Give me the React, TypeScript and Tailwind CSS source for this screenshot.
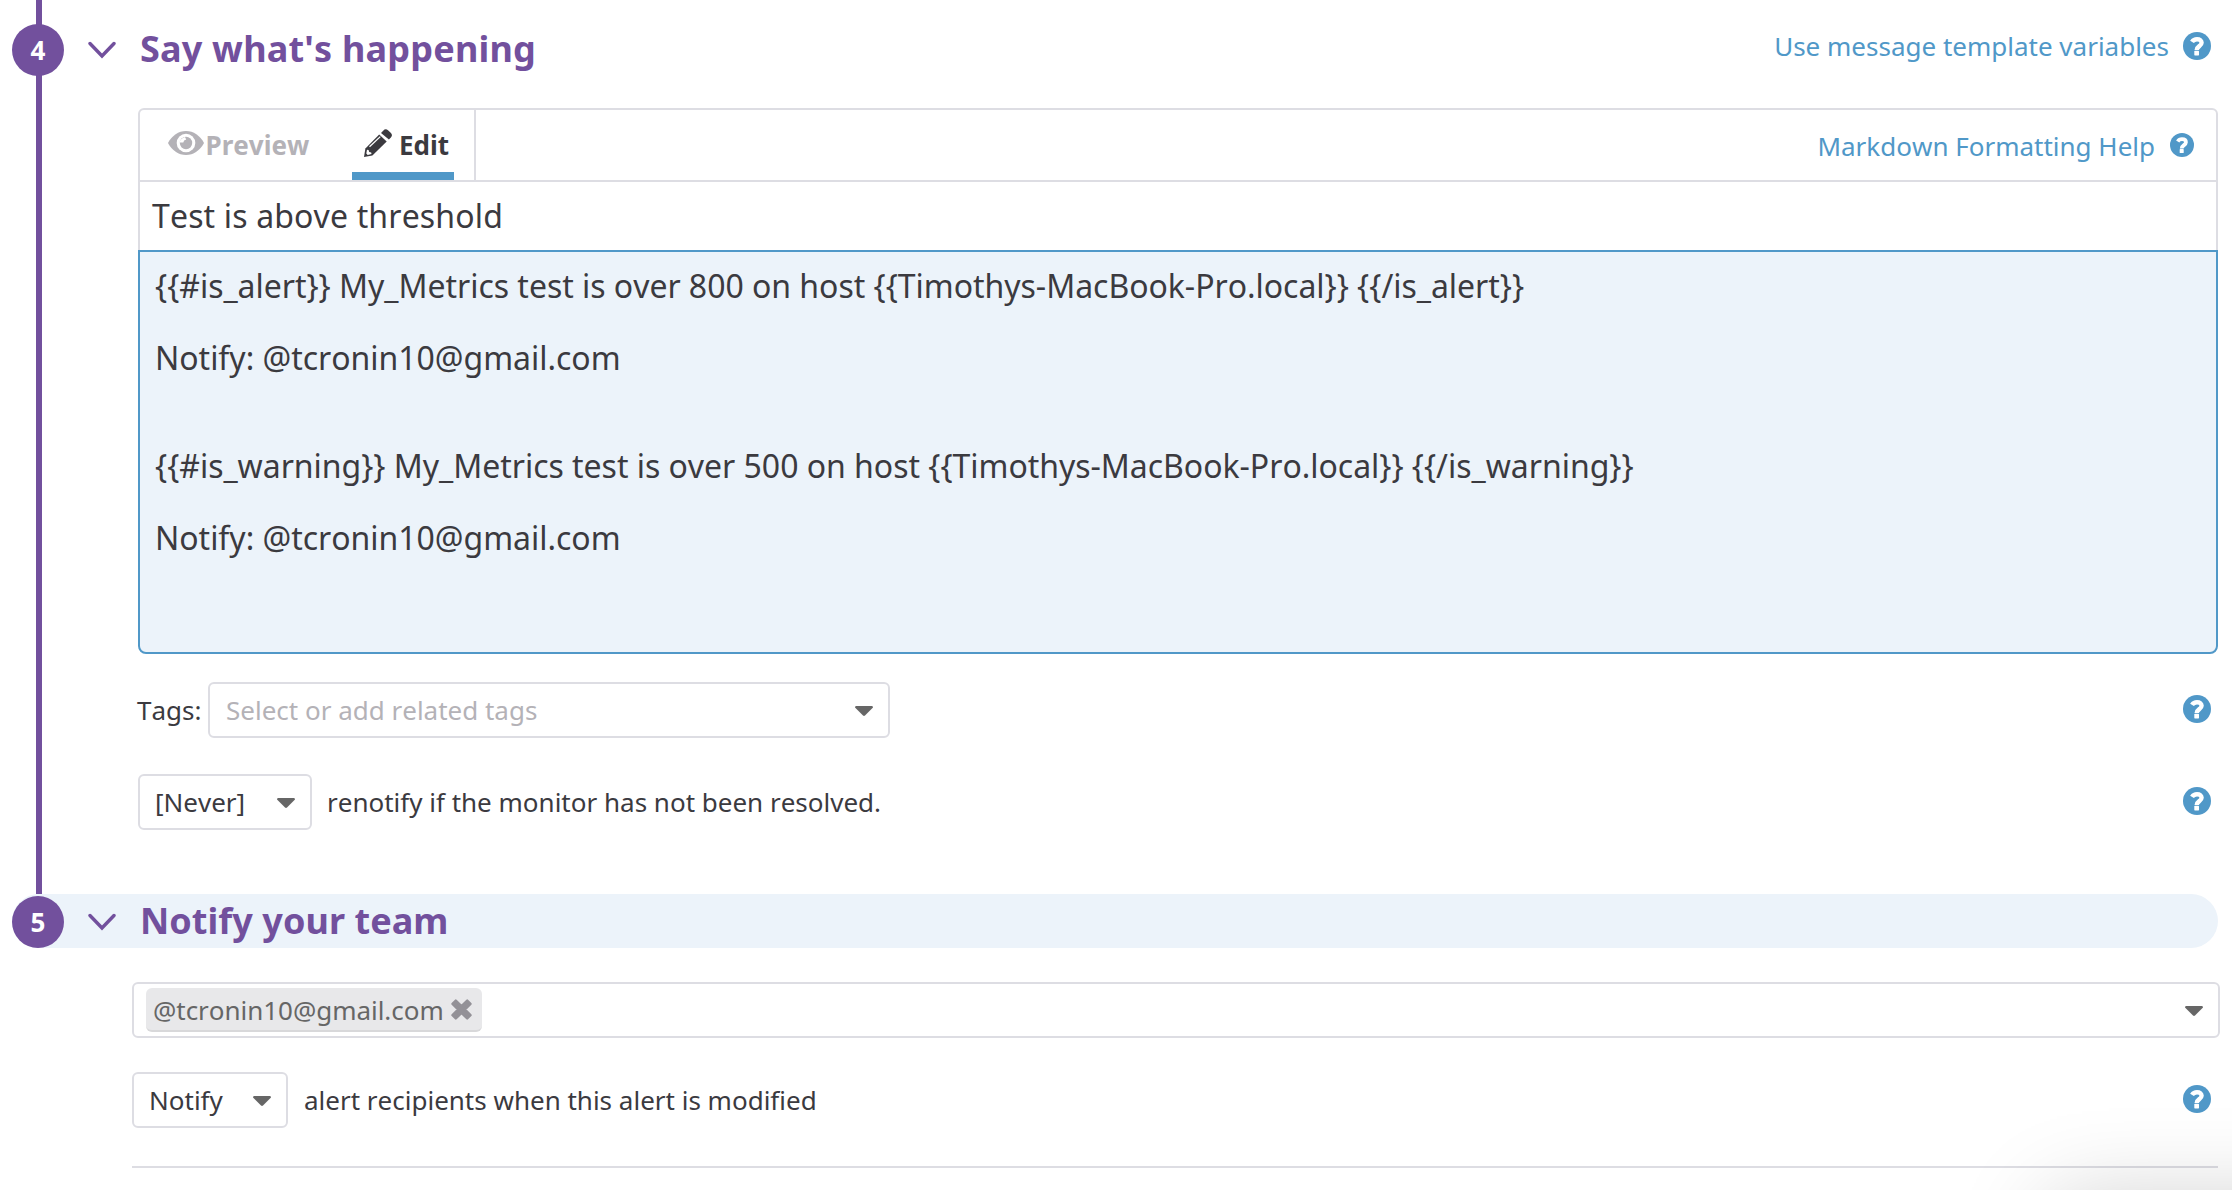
import type { ReactNode } from "react";

function HelpIcon({ className }: { className: string }) {
  return (
    <svg viewBox="0 0 28 28" className={`shrink-0 ${className}`}>
      <circle cx="14" cy="14" r="14" fill="#5098c8" />
      <path
        d="M9 9.9C10.2 8 11.9 7.2 14 7.2c2.8 0 4.6 1.5 4.6 3.6 0 3.4-4.8 3.3-4.9 7.2"
        fill="none"
        stroke="#fff"
        strokeWidth="4.4"
      />
      <rect x="11.3" y="18.8" width="4.7" height="4.6" rx="0.6" fill="#fff" />
    </svg>
  );
}

function Chevron() {
  return (
    <svg viewBox="0 0 28 18" className="h-[18px] w-7 shrink-0">
      <path
        d="M2 2.5L14 15L26 2.5"
        fill="none"
        stroke="#72509d"
        strokeWidth="3.4"
        strokeLinecap="round"
      />
    </svg>
  );
}

function Caret() {
  return (
    <svg viewBox="0 0 18 10" className="mt-0.5 h-[10px] w-[18px] shrink-0">
      <path d="M1 0h16q1 .3 1 1.600L10 9.500q-1 .8-2 0L0 1.600Q0 .3 1 0z" fill="#666" />
    </svg>
  );
}

function EyeIcon() {
  return (
    <svg viewBox="0 0 36 24" className="mb-1 h-6 w-9 shrink-0">
      <path
        d="M0 12C4 4.500 10.500 0 18 0s14 4.500 18 12c-4 7.500-10.500 12-18 12S4 19.500 0 12z"
        fill="#b4b2b7"
      />
      <circle cx="18" cy="12" r="9.300" fill="#fff" />
      <circle cx="18" cy="12" r="6.200" fill="#b4b2b7" />
      <path d="M11.500 11.500q.5-4 5.500-5.500l1.200 2.500q-2.700.3-2.900 3z" fill="#fff" />
    </svg>
  );
}

function PencilIcon() {
  return (
    <svg viewBox="0 0 28 28" className="mt-1 h-7 w-7 shrink-0">
      <path
        d="M19.200 1.700Q21.500-.8 24 1.200l2.700 2.500q2.400 2.500.2 4.700l-2 2.200-7.900-6.700z"
        fill="#3b3a3f"
      />
      <path d="M15.200 5.400l7.500 7.200L8.400 26.400 0 28l1.400-8.600z" fill="#3b3a3f" />
      <path d="M5.500 17.800L16.300 7.600" stroke="#fff" strokeWidth="1.300" />
      <path d="M3 20.700l1.600.4.600 2 2 .4.300 1.500-3.800.9-1.400-1.500z" fill="#fff" />
    </svg>
  );
}

function RemoveIcon() {
  return (
    <svg viewBox="0 0 21 21" className="h-[21px] w-[21px] shrink-0">
      <path
        d="M4.800 1.500l5.700 5.500 5.700-5.500 3.300 3.300-5.500 5.700 5.500 5.700-3.300 3.300-5.700-5.500-5.700 5.500-3.300-3.300 5.500-5.700-5.500-5.700z"
        fill="#939197"
        stroke="#939197"
        strokeWidth="2.400"
        strokeLinejoin="round"
      />
    </svg>
  );
}

function StepBadge({ children }: { children: ReactNode }) {
  return (
    <div className="flex size-[52px] shrink-0 items-center justify-center rounded-full bg-[#72509d] text-[26px] font-bold leading-none text-white">
      {children}
    </div>
  );
}

const selectBox =
  "flex h-14 items-center justify-between rounded-md border-2 border-[#dddde3] bg-white pr-[15px]";

const message = `{{#is_alert}} My_Metrics test is over 800 on host {{Timothys-MacBook-Pro.local}} {{/is_alert}}

Notify: @tcronin10@gmail.com


{{#is_warning}} My_Metrics test is over 500 on host {{Timothys-MacBook-Pro.local}} {{/is_warning}}

Notify: @tcronin10@gmail.com`;

function MessageEditor() {
  return (
    <div className="ml-[138px] mt-8 w-[2080px]">
      <div className="flex h-[74px] rounded-t-md border-2 border-[#dddde3]">
        <div className="flex w-[336px] border-r-2 border-[#dddde3] text-[26px] font-bold">
          <div className="flex h-[70px] items-center pl-7 text-[#b4b2b7]">
            <EyeIcon />
            <span className="mb-px ml-[1.5px] leading-none">Preview</span>
          </div>
          <div className="ml-auto mr-5 flex h-[70px] w-[102px] items-center border-b-8 border-[#5098c8] pl-3 text-[#3b3a3f]">
            <PencilIcon />
            <span className="ml-[7px] mt-[7px] leading-none">Edit</span>
          </div>
        </div>
        <div className="ml-auto mr-[22px] flex items-center text-[26px] text-[#5098c8]">
          <span className="mr-[15px] mt-0.5 leading-none">Markdown Formatting Help</span>
          <HelpIcon className="size-6" />
        </div>
      </div>
      <div className="h-[68px] border-x-2 border-[#dddde3] pl-3 text-[32px] leading-[68px] tracking-[0.15px]">
        Test is above threshold
      </div>
      <div className="h-[404px] whitespace-pre rounded-b-lg border-2 border-[#5098c8] bg-[#ecf3fa] pl-[15px] pt-4 text-[32px] leading-9 tracking-[-0.03px]">
        {message}
      </div>
    </div>
  );
}

export default function App() {
  return (
    <div className="relative h-[1190px] w-[2232px] overflow-hidden bg-white font-['Noto_Sans',sans-serif] text-[26px] text-[#3b3a3f] [font-kerning:none]">
      <section className="grid h-[894px] grid-cols-1 grid-rows-1">
        <div className="col-start-1 row-start-1 ml-9 w-1.5 bg-[#72509d]" />
        <div className="col-start-1 row-start-1">
          <header className="flex h-[76px] items-end pl-3">
            <StepBadge>4</StepBadge>
            <div className="ml-6 flex h-[52px] items-center">
              <Chevron />
            </div>
            <h2 className="ml-6 h-[52px] text-[36px] font-bold leading-[50px] tracking-[0.2px] text-[#72509d]">
              Say what's happening
            </h2>
            <div className="ml-auto mr-[21px] flex h-[60px] items-center text-[#5098c8]">
              <span className="mr-[14px] leading-none">Use message template variables</span>
              <HelpIcon className="size-7" />
            </div>
          </header>
          <MessageEditor />
          <div className="ml-[137px] mr-[21px] mt-7 flex h-14 items-center">
            <span className="w-[71px]">Tags:</span>
            <div className={`${selectBox} w-[682px] pl-4 text-[#b4b2b7]`}>
              <span>Select or add related tags</span>
              <Caret />
            </div>
            <HelpIcon className="-mt-0.5 ml-auto size-7" />
          </div>
          <div className="ml-[138px] mr-[21px] mt-9 flex h-14 items-center">
            <div className={`${selectBox} w-[174px] pl-[15px]`}>
              <span>[Never]</span>
              <Caret />
            </div>
            <span className="ml-[15px]">renotify if the monitor has not been resolved.</span>
            <HelpIcon className="-mt-0.5 ml-auto size-7" />
          </div>
        </div>
      </section>

      <section>
        <header className="ml-3 mr-3.5 flex h-[54px] items-end rounded-full bg-[#ecf3fa]">
          <StepBadge>5</StepBadge>
          <div className="ml-6 flex h-[52px] items-center">
            <Chevron />
          </div>
          <h2 className="ml-6 h-[52px] text-[36px] font-bold leading-[50px] tracking-[0.05px] text-[#72509d]">
            Notify your team
          </h2>
        </header>
        <div className={`${selectBox} ml-[132px] mr-3 mt-[34px] pl-3`}>
          <div className="flex h-11 w-[336px] items-center rounded-md border-b-2 border-[#d8d8da] bg-[#e8e8ea] pl-[7px] text-[#666]">
            <span className="pt-0.5 tracking-[-0.04px]">@tcronin10@gmail.com</span>
            <span className="ml-[7px]">
              <RemoveIcon />
            </span>
          </div>
          <Caret />
        </div>
        <div className="ml-[132px] mr-[21px] mt-[34px] flex h-14 items-center">
          <div className={`${selectBox} w-[156px] pl-[15px]`}>
            <span>Notify</span>
            <Caret />
          </div>
          <span className="ml-4">alert recipients when this alert is modified</span>
          <HelpIcon className="-mt-0.5 ml-auto size-7" />
        </div>
        <hr className="ml-[132px] mr-3.5 mt-[38px] border-t-2 border-[#dddde3]" />
      </section>

      <div className="pointer-events-none absolute left-[2050px] top-[1202px] h-[400px] w-[600px] shadow-[0_0_90px_rgba(0,0,0,0.2)]" />
    </div>
  );
}
